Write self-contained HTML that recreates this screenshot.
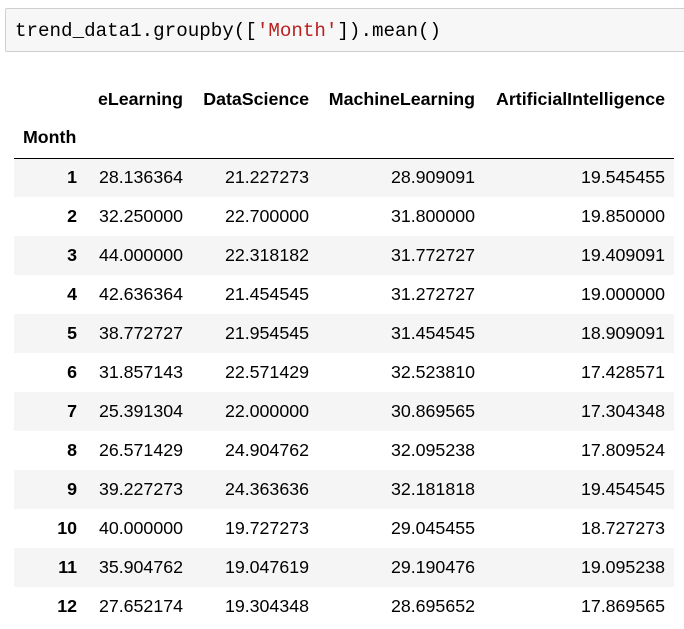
<!DOCTYPE html>
<html><head><style>
body{margin:0;background:#fff;width:684px;height:629px;overflow:hidden;font-family:"Liberation Sans",Arial,sans-serif;}
.code{position:absolute;left:5px;top:8px;width:690px;height:44px;background:#f7f7f7;border:1px solid #cfcfcf;border-radius:2px;box-sizing:border-box;}
.code span.t{position:absolute;left:9px;top:10px;font-family:"Liberation Mono",monospace;font-size:19.2px;color:#000;line-height:24px;white-space:pre;}
.s{color:#ba2121}
table{position:absolute;left:14px;top:80px;border-collapse:collapse;font-size:17.8px;color:#000;table-layout:fixed;width:660px;}
th,td{text-align:right;padding:0 9px 0 0;height:39px;white-space:nowrap;}
th{font-weight:bold;}
thead tr.h1 th{height:38px;}
thead tr.h2 th{height:40px;border-bottom:1.5px solid #000;}
tbody tr:nth-child(odd){background:#f5f5f5;}
col.c0{width:72px}col.c1{width:106px}col.c2{width:126px}col.c3{width:166px}col.c4{width:190px}
td,th{box-sizing:border-box}
</style></head><body>
<div class="code"><span class="t">trend_data1.groupby([<span class="s">'Month'</span>]).mean()</span></div>
<table>
<colgroup><col class="c0"><col class="c1"><col class="c2"><col class="c3"><col class="c4"></colgroup>
<thead>
<tr class="h1"><th></th><th>eLearning</th><th>DataScience</th><th>MachineLearning</th><th>ArtificialIntelligence</th></tr>
<tr class="h2"><th style="text-align:left;padding-left:9px">Month</th><th></th><th></th><th></th><th></th></tr>
</thead>
<tbody>
<tr><th>1</th><td>28.136364</td><td>21.227273</td><td>28.909091</td><td>19.545455</td></tr>
<tr><th>2</th><td>32.250000</td><td>22.700000</td><td>31.800000</td><td>19.850000</td></tr>
<tr><th>3</th><td>44.000000</td><td>22.318182</td><td>31.772727</td><td>19.409091</td></tr>
<tr><th>4</th><td>42.636364</td><td>21.454545</td><td>31.272727</td><td>19.000000</td></tr>
<tr><th>5</th><td>38.772727</td><td>21.954545</td><td>31.454545</td><td>18.909091</td></tr>
<tr><th>6</th><td>31.857143</td><td>22.571429</td><td>32.523810</td><td>17.428571</td></tr>
<tr><th>7</th><td>25.391304</td><td>22.000000</td><td>30.869565</td><td>17.304348</td></tr>
<tr><th>8</th><td>26.571429</td><td>24.904762</td><td>32.095238</td><td>17.809524</td></tr>
<tr><th>9</th><td>39.227273</td><td>24.363636</td><td>32.181818</td><td>19.454545</td></tr>
<tr><th>10</th><td>40.000000</td><td>19.727273</td><td>29.045455</td><td>18.727273</td></tr>
<tr><th>11</th><td>35.904762</td><td>19.047619</td><td>29.190476</td><td>19.095238</td></tr>
<tr><th>12</th><td>27.652174</td><td>19.304348</td><td>28.695652</td><td>17.869565</td></tr>
</tbody></table>
</body></html>
